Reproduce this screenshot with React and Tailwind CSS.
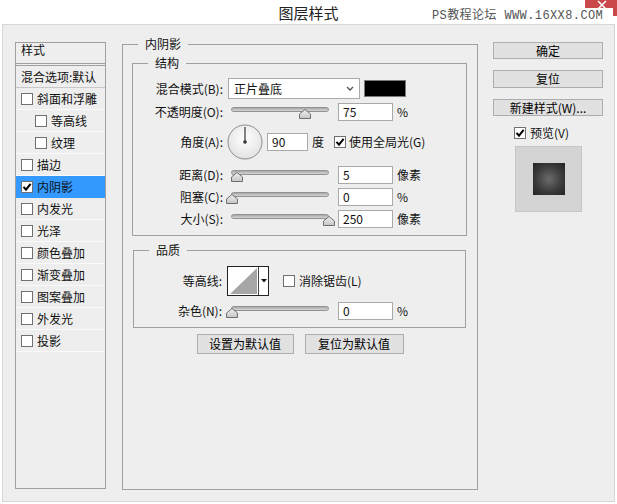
import React from 'react'

const styleRows = [
  { label: '斜面和浮雕' },
  { label: '等高线', indent: true },
  { label: '纹理', indent: true },
  { label: '描边' },
  { label: '内阴影', checked: true, active: true },
  { label: '内发光' },
  { label: '光泽' },
  { label: '颜色叠加' },
  { label: '渐变叠加' },
  { label: '图案叠加' },
  { label: '外发光' },
  { label: '投影' },
]

function Check({ checked }) {
  return (
    <span className="w-[12px] h-[12px] border border-[#707070] bg-white flex items-center justify-center shrink-0">
      {checked && (
        <svg width="10" height="10" viewBox="0 0 10 10">
          <path d="M1.5 4.8 L4 7.6 L8.6 1.8" stroke="#000" strokeWidth="2" fill="none" />
        </svg>
      )}
    </span>
  )
}

function Thumb({ x }) {
  return (
    <svg width="12" height="10" viewBox="0 0 12 10" className="absolute top-[6px]" style={{ left: x - 6 }}>
      <defs>
        <linearGradient id="tg" x1="0" y1="0" x2="0" y2="1">
          <stop offset="0" stopColor="#f2f2f2" />
          <stop offset="1" stopColor="#c4c4c4" />
        </linearGradient>
      </defs>
      <path d="M6 0.5 L11.5 5 L11.5 9.5 L0.5 9.5 L0.5 5 Z" fill="url(#tg)" stroke="#6f6f6f" strokeWidth="1" />
    </svg>
  )
}

function Slider({ x }) {
  return (
    <div className="relative w-[106px] h-[18px] shrink-0">
      <div className="absolute left-[5px] top-[4px] w-[98px] h-[5px] rounded-full border border-[#929292] bg-gradient-to-b from-[#a8a8a8] to-[#d6d6d6]" />
      <Thumb x={x} />
    </div>
  )
}

function Field({ value, className = 'w-[55px]' }) {
  return (
    <div className={`h-[18px] border border-[#a9a9a9] bg-white pl-[4px] text-[12px] leading-[16px] shrink-0 ${className}`}>
      {value}
    </div>
  )
}

function SliderRow({ label, x, value, unit, labelW = 'w-[90px]', gap = 'ml-[3px]', className = '' }) {
  return (
    <div className={`flex items-center h-[18px] ${className}`}>
      <span className={`${labelW} text-right shrink-0`}>{label}</span>
      <div className={gap}>
        <Slider x={x} />
      </div>
      <Field value={value} className="w-[55px] ml-[6px]" />
      <span className="ml-[4px]">{unit}</span>
    </div>
  )
}

function GroupBox({ title, className, children }) {
  return (
    <div className={`relative border border-[#a0a0a0] ${className}`}>
      <span className="absolute -top-[9px] left-[15px] px-[7px] bg-[#eeeeee] leading-[16px]">{title}</span>
      {children}
    </div>
  )
}

function Button({ children, className = '' }) {
  return (
    <button className={`border border-[#adadad] bg-[#e1e1e1] text-[12px] leading-none text-black flex items-center justify-center ${className}`}>
      {children}
    </button>
  )
}

export default function App() {
  return (
    <div className="w-[617px] h-[504px] bg-white relative overflow-hidden text-[12px] text-[#111] font-['Noto_Sans_CJK_SC','Noto_Sans',sans-serif]">
      {/* Title bar */}
      <div className="h-[24px] flex items-center justify-center">
        <span className="text-[15px] text-[#222] leading-none">图层样式</span>
      </div>
      <div className="absolute top-0 right-0 w-[32px] h-[16px] bg-[#c9494b]">
        <svg width="32" height="16" viewBox="0 0 32 16">
          <path d="M13 1 L21 9 M21 1 L13 9" stroke="#fff" strokeWidth="1.6" />
        </svg>
      </div>
      <div className="absolute left-[429px] top-[8px] w-[184px] h-[16px] bg-white pl-[3px] text-[12px] leading-[16px] tracking-[0.4px] text-[#555] whitespace-nowrap font-['Liberation_Mono','Noto_Sans_CJK_SC',monospace]">
        PS教程论坛 WWW.16XX8.COM
      </div>

      {/* Body */}
      <div className="mx-[2px] h-[478px] border border-[#d6d6d6] bg-[#eeeeee] pt-[17px] pl-[12px] flex items-start">
        {/* Styles list */}
        <div className="w-[91px] h-[447px] border border-[#a0a0a0] shrink-0">
          <div className="h-[23px] border-b-[3px] border-double border-[#a0a0a0] pl-[5px] leading-[14px]">样式</div>
          <div className="h-[22px] border-b border-[#c8c8c8] pl-[5px] flex items-center whitespace-nowrap">混合选项:默认</div>
          {styleRows.map((r) => (
            <div
              key={r.label}
              className={`h-[22px] border-b flex items-center ${r.indent ? 'pl-[19px]' : 'pl-[5px]'} ${r.active ? 'bg-[#3399ff] border-[#3399ff]' : 'border-[#fafafa]'}`}
            >
              <Check checked={r.checked} />
              <span className="ml-[4px]">{r.label}</span>
            </div>
          ))}
        </div>

        {/* Inner shadow settings */}
        <GroupBox title="内阴影" className="ml-[16px] mt-[2px] w-[356px] h-[446px] shrink-0">
          <GroupBox title="结构" className="ml-[9px] mt-[18px] w-[335px] h-[173px] pt-[14px]">
            <div className="flex items-center h-[21px]">
              <span className="w-[90px] text-right shrink-0">混合模式(B):</span>
              <div className="ml-[5px] w-[132px] h-[21px] border border-[#a9a9a9] bg-white flex items-center justify-between pl-[5px] pr-[5px]">
                <span>正片叠底</span>
                <svg width="8" height="6" viewBox="0 0 8 6">
                  <path d="M1 1 L4 4 L7 1" stroke="#555" strokeWidth="1.4" fill="none" />
                </svg>
              </div>
              <div className="ml-[4px] w-[42px] h-[17px] border border-[#7a7a7a] bg-black" />
            </div>
            <SliderRow label="不透明度(O):" x={79} value="75" unit="%" className="mt-[4px]" />
            <div className="flex items-center h-[36px] mt-[3px]">
              <span className="w-[90px] text-right shrink-0">角度(A):</span>
              <svg width="36" height="36" viewBox="0 0 36 36" className="ml-[4px] shrink-0">
                <defs>
                  <radialGradient id="dg" cx="0.5" cy="0.4" r="0.6">
                    <stop offset="0" stopColor="#ffffff" />
                    <stop offset="1" stopColor="#e2e2e2" />
                  </radialGradient>
                </defs>
                <circle cx="18" cy="18" r="17" fill="url(#dg)" stroke="#8c8c8c" strokeWidth="1" />
                <line x1="18" y1="18" x2="18" y2="3" stroke="#333" strokeWidth="1.2" />
                <circle cx="18" cy="18" r="1.8" fill="#333" />
              </svg>
              <Field value="90" className="w-[41px] ml-[4px]" />
              <span className="ml-[4px]">度</span>
              <span className="ml-[10px]">
                <Check checked />
              </span>
              <span className="ml-[3px]">使用全局光(G)</span>
            </div>
            <SliderRow label="距离(D):" x={11} value="5" unit="像素" className="mt-[6px]" />
            <SliderRow label="阻塞(C):" x={6} value="0" unit="%" className="mt-[4px]" />
            <SliderRow label="大小(S):" x={103} value="250" unit="像素" className="mt-[4px]" />
          </GroupBox>

          <GroupBox title="品质" className="ml-[10px] mt-[14px] w-[333px] h-[78px] pt-[15px]">
            <div className="flex items-center h-[30px]">
              <span className="w-[88px] text-right shrink-0">等高线:</span>
              <div className="ml-[5px] flex h-[30px] border border-[#222] bg-white shrink-0">
                <div className="w-[30px] h-full flex items-center justify-center">
                  <svg width="28" height="26" viewBox="0 0 28 26">
                    <polygon points="1,26 28,0 28,26" fill="#a6a6a6" />
                  </svg>
                </div>
                <div className="w-[10px] border-l border-[#444] flex items-center justify-center">
                  <svg width="6" height="4" viewBox="0 0 6 4">
                    <polygon points="0,0 6,0 3,3.5" fill="#111" />
                  </svg>
                </div>
              </div>
              <span className="ml-[14px]">
                <Check />
              </span>
              <span className="ml-[4px]">消除锯齿(L)</span>
            </div>
            <SliderRow label="杂色(N):" x={6} value="0" unit="%" labelW="w-[88px]" gap="ml-[4px]" className="mt-[6px]" />
          </GroupBox>

          <div className="mt-[6px] flex justify-center gap-[11px]">
            <Button className="w-[97px] h-[20px]">设置为默认值</Button>
            <Button className="w-[99px] h-[20px]">复位为默认值</Button>
          </div>
        </GroupBox>

        {/* Right column */}
        <div className="ml-[15px] w-[110px] flex flex-col shrink-0">
          <Button className="h-[17px] border-[#3c8fe0]">确定</Button>
          <Button className="h-[18px] mt-[11px]">复位</Button>
          <Button className="h-[17px] mt-[11px]">新建样式(W)...</Button>
          <div className="mt-[10px] h-[14px] flex items-center pl-[21px]">
            <Check checked />
            <span className="ml-[4px]">预览(V)</span>
          </div>
          <div className="mt-[6px] ml-[22px] w-[67px] h-[66px] bg-[#d4d4d4] border border-[#c6c6c6] flex items-center justify-center">
            <div className="w-[32px] h-[32px] bg-[radial-gradient(circle,#6a6a6a_0%,#3a3a3a_60%,#232323_100%)]" />
          </div>
        </div>
      </div>
    </div>
  )
}
